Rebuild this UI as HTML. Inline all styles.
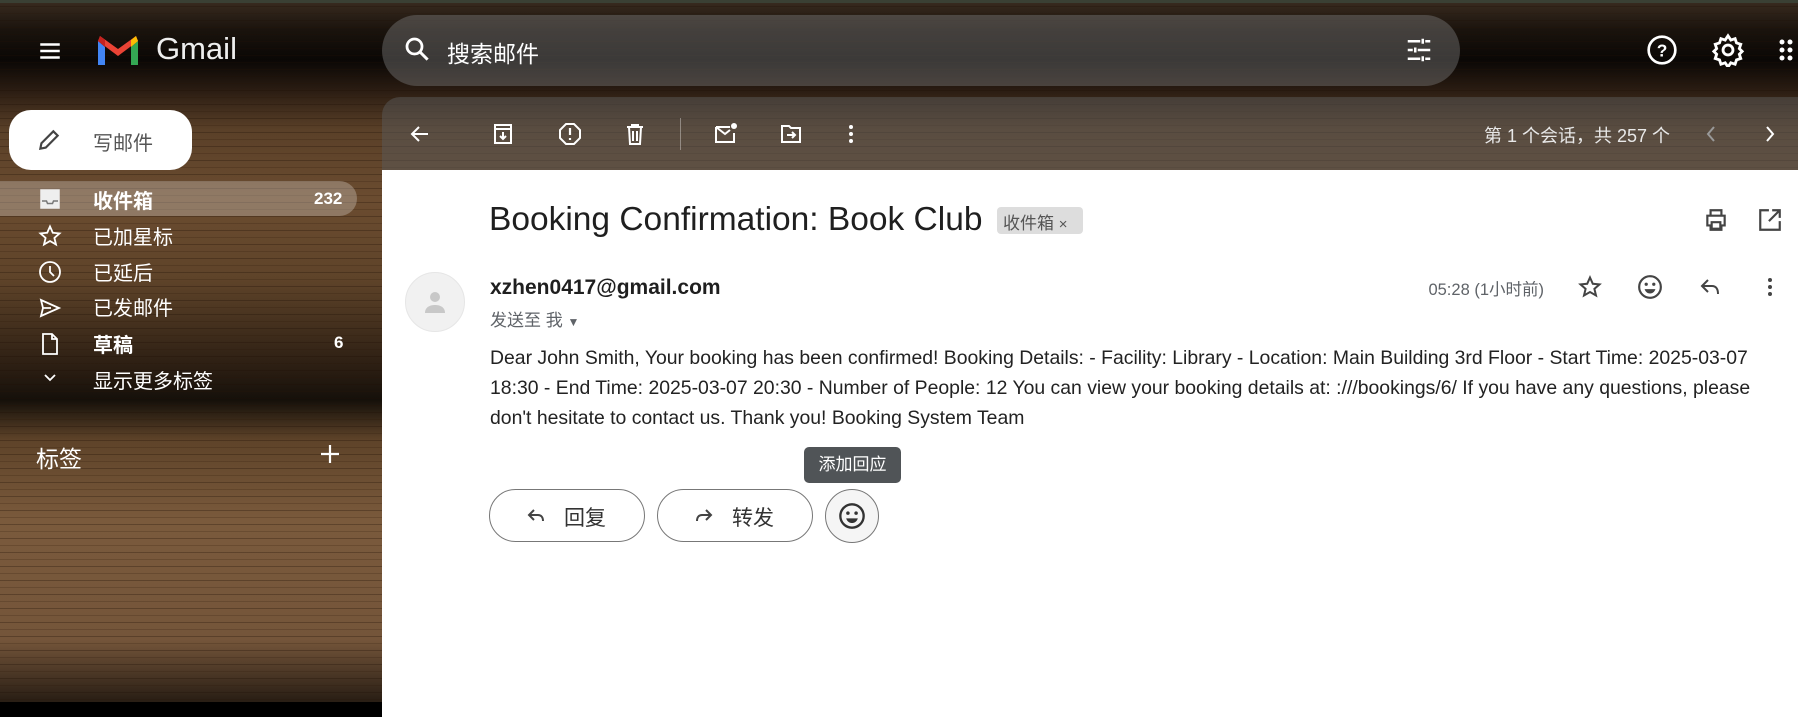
<!DOCTYPE html>
<html><head><meta charset="utf-8"><style>
*{box-sizing:border-box;margin:0;padding:0}
body{width:1798px;height:717px;overflow:hidden;position:relative;font-family:"Liberation Sans","Noto Sans CJK SC",sans-serif;background:#000}
.wood{position:absolute;left:0;top:0;width:1798px;height:702px;
background:
repeating-linear-gradient(180deg,rgba(0,0,0,0) 0 6px,rgba(30,15,5,.3) 6px 7px,rgba(0,0,0,0) 7px 13px,rgba(40,20,5,.2) 13px 14px),
linear-gradient(180deg,#3a2c20 0,#1a130d 30px,#0a0705 60px,#2a1c12 90px,#5a4028 130px,#6b4c30 200px,#5e4329 280px,#2a1d12 370px,#15100a 400px,#5e4329 440px,#7a5a3c 520px,#74553a 640px,#2a1f15 700px)}
.topstrip{position:absolute;left:0;top:0;width:1798px;height:3px;background:#3a4034}
.abs{position:absolute}
.w{color:#fff}
svg{display:block}
</style></head><body>
<div class="wood"></div>
<div class="topstrip"></div>
<div class="abs" style="left:0;top:702px;width:382px;height:15px;background:#000"></div>

<svg class="abs" style="left:37px;top:38px" width="26" height="26" viewBox="0 0 24 24"><path d="M3 6h18M3 12h18M3 18h18" stroke="#fff" stroke-width="2.2"/></svg>
<svg class="abs" style="left:95px;top:33px" width="46" height="34" viewBox="0 0 46 34">
<path d="M3 32h7V14L3 8z" fill="#4285f4"/><path d="M36 32h7V8l-7 6z" fill="#34a853"/>
<path d="M3 8l20 15 20-15-2-5-18 13L5 3z" fill="#ea4335"/><path d="M36 14l7-6-2-5-5 4z" fill="#fbbc04"/><path d="M3 8l7 6V7L5 3z" fill="#c5221f"/></svg>
<div class="abs w" style="left:156px;top:31px;font-size:31px;color:#eee">Gmail</div>

<div class="abs" style="left:382px;top:15px;width:1078px;height:71px;border-radius:36px;background:rgba(120,120,120,.45)"></div>
<svg class="abs" style="left:402px;top:34px" width="30" height="30" viewBox="0 0 24 24"><circle cx="10" cy="10" r="6" fill="none" stroke="#fff" stroke-width="2.2"/><path d="M14.5 14.5l6 6" stroke="#fff" stroke-width="2.4"/></svg>
<div class="abs w" style="left:447px;top:35px;font-size:23px">搜索邮件</div>
<svg class="abs" style="left:1404px;top:35px" width="30" height="30" viewBox="0 0 24 24"><path d="M3 5h10M17 5h4M15 3v4M3 12h4M11 12h10M9 10v4M3 19h10M17 19h4M15 17v4" stroke="#fff" stroke-width="2"/></svg>
<svg class="abs" style="left:1646px;top:34px" width="32" height="32" viewBox="0 0 24 24"><circle cx="12" cy="12" r="10" fill="none" stroke="#fff" stroke-width="2"/><text x="12" y="17" font-size="13" fill="#fff" text-anchor="middle" font-family="Liberation Sans" font-weight="bold">?</text></svg>
<svg class="abs" style="left:1711px;top:33px" width="34" height="34" viewBox="0 0 24 24"><path d="M12 2l2 3 3-1 1 3 3 1-1 3 2 2-2 2 1 3-3 1-1 3-3-1-2 3-2-3-3 1-1-3-3-1 1-3-2-2 2-2-1-3 3-1 1-3 3 1z" fill="none" stroke="#fff" stroke-width="2"/><circle cx="12" cy="12" r="3.5" fill="none" stroke="#fff" stroke-width="2"/></svg>
<svg class="abs" style="left:1778px;top:38px" width="20" height="26" viewBox="0 0 20 26"><g fill="#fff"><circle cx="4" cy="4" r="2.5"/><circle cx="12" cy="4" r="2.5"/><circle cx="4" cy="12" r="2.5"/><circle cx="12" cy="12" r="2.5"/><circle cx="4" cy="20" r="2.5"/><circle cx="12" cy="20" r="2.5"/></g></svg>

<div class="abs" style="left:9px;top:110px;width:183px;height:60px;border-radius:22px;background:#fff"></div>
<svg class="abs" style="left:36px;top:127px" width="26" height="26" viewBox="0 0 24 24"><path d="M4 20l1-5L16 4l4 4L9 19z" fill="none" stroke="#444" stroke-width="2"/></svg>
<div class="abs" style="left:93px;top:127px;font-size:20px;color:#555">写邮件</div>
<div class="abs" style="left:0;top:181px;width:357px;height:35px;border-radius:0 18px 18px 0;background:rgba(200,190,180,.4)"></div>
<svg class="abs" style="left:38px;top:187px" width="24" height="24" viewBox="0 0 24 24"><path d="M3 3h18v18H3z" fill="#eee" stroke="#eee" stroke-width="1.5"/><path d="M4 14h4.5l1 2.5h5l1-2.5H20" fill="none" stroke="#777" stroke-width="1.5"/></svg>
<div class="abs w" style="left:93px;top:185px;font-size:20px;font-weight:bold">收件箱</div>
<div class="abs w" style="left:314px;top:189px;font-size:17px;font-weight:bold">232</div>
<svg class="abs" style="left:38px;top:224px" width="24" height="24" viewBox="0 0 24 24"><path d="M12 2.5l2.8 6.3 6.7.6-5.1 4.5 1.6 6.6L12 17l-6 3.5 1.6-6.6L2.5 9.4l6.7-.6z" fill="none" stroke="#fff" stroke-width="1.8"/></svg>
<div class="abs w" style="left:93px;top:221px;font-size:20px">已加星标</div>
<svg class="abs" style="left:38px;top:260px" width="24" height="24" viewBox="0 0 24 24"><circle cx="12" cy="12" r="10" fill="none" stroke="#fff" stroke-width="1.8"/><path d="M12 6v6l4 4" fill="none" stroke="#fff" stroke-width="1.8"/></svg>
<div class="abs w" style="left:93px;top:257px;font-size:20px">已延后</div>
<svg class="abs" style="left:38px;top:296px" width="24" height="24" viewBox="0 0 24 24"><path d="M3 4l18 8-18 8 2-8z M5 12h8" fill="none" stroke="#fff" stroke-width="1.8"/></svg>
<div class="abs w" style="left:93px;top:292px;font-size:20px">已发邮件</div>
<svg class="abs" style="left:38px;top:332px" width="24" height="24" viewBox="0 0 24 24"><path d="M5 2h9l5 5v15H5z M14 2v5h5" fill="none" stroke="#fff" stroke-width="1.8"/></svg>
<div class="abs w" style="left:93px;top:329px;font-size:20px;font-weight:bold">草稿</div>
<div class="abs w" style="left:334px;top:333px;font-size:17px;font-weight:bold">6</div>
<svg class="abs" style="left:42px;top:370px" width="16" height="16" viewBox="0 0 16 16"><path d="M3 5l5 5 5-5" fill="none" stroke="#fff" stroke-width="1.8"/></svg>
<div class="abs w" style="left:93px;top:365px;font-size:20px">显示更多标签</div>
<div class="abs w" style="left:36px;top:440px;font-size:23px">标签</div>
<svg class="abs" style="left:319px;top:443px" width="22" height="22" viewBox="0 0 22 22"><path d="M11 2v18M2 11h18" stroke="#fff" stroke-width="2.2"/></svg>

<div class="abs" style="left:382px;top:97px;width:1416px;height:73px;border-radius:18px 0 0 0;background:rgba(90,90,90,.5)"></div>
<svg class="abs" style="left:408px;top:122px" width="24" height="24" viewBox="0 0 24 24"><path d="M20 12H5M11 5l-7 7 7 7" fill="none" stroke="#fff" stroke-width="2"/></svg>
<svg class="abs" style="left:491px;top:122px" width="24" height="24" viewBox="0 0 24 24"><path d="M4 3h16v18H4z M4 7h16 M12 10v7M9 14l3 3 3-3" fill="none" stroke="#fff" stroke-width="2"/></svg>
<svg class="abs" style="left:558px;top:122px" width="24" height="24" viewBox="0 0 24 24"><path d="M8 2h8l6 6v8l-6 6H8l-6-6V8z" fill="none" stroke="#fff" stroke-width="2"/><path d="M12 6v7M12 16v2" stroke="#fff" stroke-width="2.2"/></svg>
<svg class="abs" style="left:623px;top:122px" width="24" height="24" viewBox="0 0 24 24"><path d="M4 5h16M9 5V3h6v2M6 5l1 17h10l1-17M10 9v10M14 9v10" fill="none" stroke="#fff" stroke-width="2"/></svg>
<div class="abs" style="left:680px;top:118px;width:1px;height:32px;background:rgba(255,255,255,.35)"></div>
<svg class="abs" style="left:713px;top:122px" width="26" height="24" viewBox="0 0 26 24"><path d="M3 5h14M3 5v15h18v-9M3 5l9 7 5-4" fill="none" stroke="#fff" stroke-width="2"/><circle cx="21" cy="4" r="3" fill="#fff"/></svg>
<svg class="abs" style="left:779px;top:122px" width="24" height="24" viewBox="0 0 24 24"><path d="M3 4h7l2 2h9v14H3z M8 13h8M13 10l3 3-3 3" fill="none" stroke="#fff" stroke-width="2"/></svg>
<svg class="abs" style="left:843px;top:122px" width="16" height="24" viewBox="0 0 16 24"><g fill="#fff"><circle cx="8" cy="5" r="2"/><circle cx="8" cy="12" r="2"/><circle cx="8" cy="19" r="2"/></g></svg>
<div class="abs" style="left:1484px;top:122px;font-size:18px;color:#e8e8e8">第 1 个会话，共 257 个</div>
<svg class="abs" style="left:1703px;top:124px" width="16" height="20" viewBox="0 0 16 20"><path d="M11 3l-6 7 6 7" fill="none" stroke="#999" stroke-width="2"/></svg>
<svg class="abs" style="left:1762px;top:124px" width="16" height="20" viewBox="0 0 16 20"><path d="M5 3l6 7-6 7" fill="none" stroke="#fff" stroke-width="2"/></svg>

<div class="abs" style="left:382px;top:170px;width:1416px;height:547px;background:#fff"></div>
<div class="abs" style="left:489px;top:201px;font-size:33.5px;color:#1f1f1f">Booking Confirmation: Book Club</div>
<div class="abs" style="left:997px;top:207px;width:86px;height:27px;border-radius:4px;background:#ddd;color:#555;font-size:17px;padding:2px 0 0 6px">收件箱 <span style="font-size:15px">×</span></div>
<svg class="abs" style="left:1703px;top:207px" width="26" height="26" viewBox="0 0 24 24"><path d="M7 8V3h10v5M4 8h16v9h-3v4H7v-4H4z M8 14h8v6H8z" fill="none" stroke="#444" stroke-width="2"/></svg>
<svg class="abs" style="left:1757px;top:207px" width="26" height="26" viewBox="0 0 24 24"><path d="M11 3H3v18h18v-8M14 3h7v7M21 3L11 13" fill="none" stroke="#444" stroke-width="2"/></svg>

<div class="abs" style="left:405px;top:272px;width:60px;height:60px;border-radius:50%;background:#f1f1f1;border:1px solid #e6e6e6"></div>
<svg class="abs" style="left:420px;top:287px" width="30" height="30" viewBox="0 0 30 30"><circle cx="15" cy="10" r="5" fill="#c8c8c8"/><path d="M5 26c0-6 5-8 10-8s10 2 10 8z" fill="#c8c8c8"/></svg>
<div class="abs" style="left:490px;top:276px;font-size:21px;font-weight:bold;color:#1f1f1f">xzhen0417@gmail.com</div>
<div class="abs" style="left:490px;top:306px;font-size:17px;color:#5f6368">发送至 我 <span style="font-size:12px">▼</span></div>
<div class="abs" style="left:1400px;top:276px;width:144px;text-align:right;font-size:16.5px;color:#5f6368">05:28 (1小时前)</div>
<svg class="abs" style="left:1578px;top:275px" width="24" height="24" viewBox="0 0 24 24"><path d="M12 2.5l2.8 6.3 6.7.6-5.1 4.5 1.6 6.6L12 17l-6 3.5 1.6-6.6L2.5 9.4l6.7-.6z" fill="none" stroke="#444" stroke-width="2"/></svg>
<svg class="abs" style="left:1637px;top:274px" width="26" height="26" viewBox="0 0 24 24"><circle cx="12" cy="12" r="10" fill="none" stroke="#444" stroke-width="2"/><circle cx="8.5" cy="9.5" r="1.5" fill="#444"/><circle cx="15.5" cy="9.5" r="1.5" fill="#444"/><path d="M7 14h10c-1 3-3 4-5 4s-4-1-5-4z" fill="#444"/></svg>
<svg class="abs" style="left:1698px;top:275px" width="24" height="24" viewBox="0 0 24 24"><path d="M10 5L4 11l6 6M4 11h10c4 0 6 3 6 8" fill="none" stroke="#444" stroke-width="2"/></svg>
<svg class="abs" style="left:1762px;top:275px" width="16" height="24" viewBox="0 0 16 24"><g fill="#444"><circle cx="8" cy="5" r="2"/><circle cx="8" cy="12" r="2"/><circle cx="8" cy="19" r="2"/></g></svg>

<div class="abs" style="left:490px;top:343px;width:1280px;font-size:19.4px;line-height:30px;color:#222">Dear John Smith, Your booking has been confirmed! Booking Details: - Facility: Library - Location: Main Building 3rd Floor - Start Time: 2025-03-07 18:30 - End Time: 2025-03-07 20:30 - Number of People: 12 You can view your booking details at: :///bookings/6/ If you have any questions, please don't hesitate to contact us. Thank you! Booking System Team</div>

<div class="abs" style="left:804px;top:447px;width:97px;height:36px;border-radius:5px;background:#505457;color:#fff;font-size:17px;text-align:center;line-height:36px">添加回应</div>
<div class="abs" style="left:489px;top:489px;width:156px;height:53px;border-radius:27px;border:1px solid #777"></div>
<svg class="abs" style="left:524px;top:504px" width="24" height="24" viewBox="0 0 24 24"><path d="M10 6L5 11l5 5M5 11h9c3 0 5 2 5 6" fill="none" stroke="#444" stroke-width="2"/></svg>
<div class="abs" style="left:564px;top:502px;font-size:21px;color:#333">回复</div>
<div class="abs" style="left:657px;top:489px;width:156px;height:53px;border-radius:27px;border:1px solid #777"></div>
<svg class="abs" style="left:692px;top:504px" width="24" height="24" viewBox="0 0 24 24"><path d="M14 6l5 5-5 5M19 11h-9c-3 0-5 2-5 6" fill="none" stroke="#444" stroke-width="2"/></svg>
<div class="abs" style="left:732px;top:502px;font-size:21px;color:#333">转发</div>
<div class="abs" style="left:825px;top:489px;width:54px;height:54px;border-radius:50%;border:1px solid #777;background:#f5f5f5"></div>
<svg class="abs" style="left:838px;top:502px" width="28" height="28" viewBox="0 0 24 24"><circle cx="12" cy="12" r="10" fill="none" stroke="#333" stroke-width="2"/><circle cx="8.5" cy="9.5" r="1.5" fill="#333"/><circle cx="15.5" cy="9.5" r="1.5" fill="#333"/><path d="M7 14h10c-1 3-3 4-5 4s-4-1-5-4z" fill="#333"/></svg>
</body></html>
